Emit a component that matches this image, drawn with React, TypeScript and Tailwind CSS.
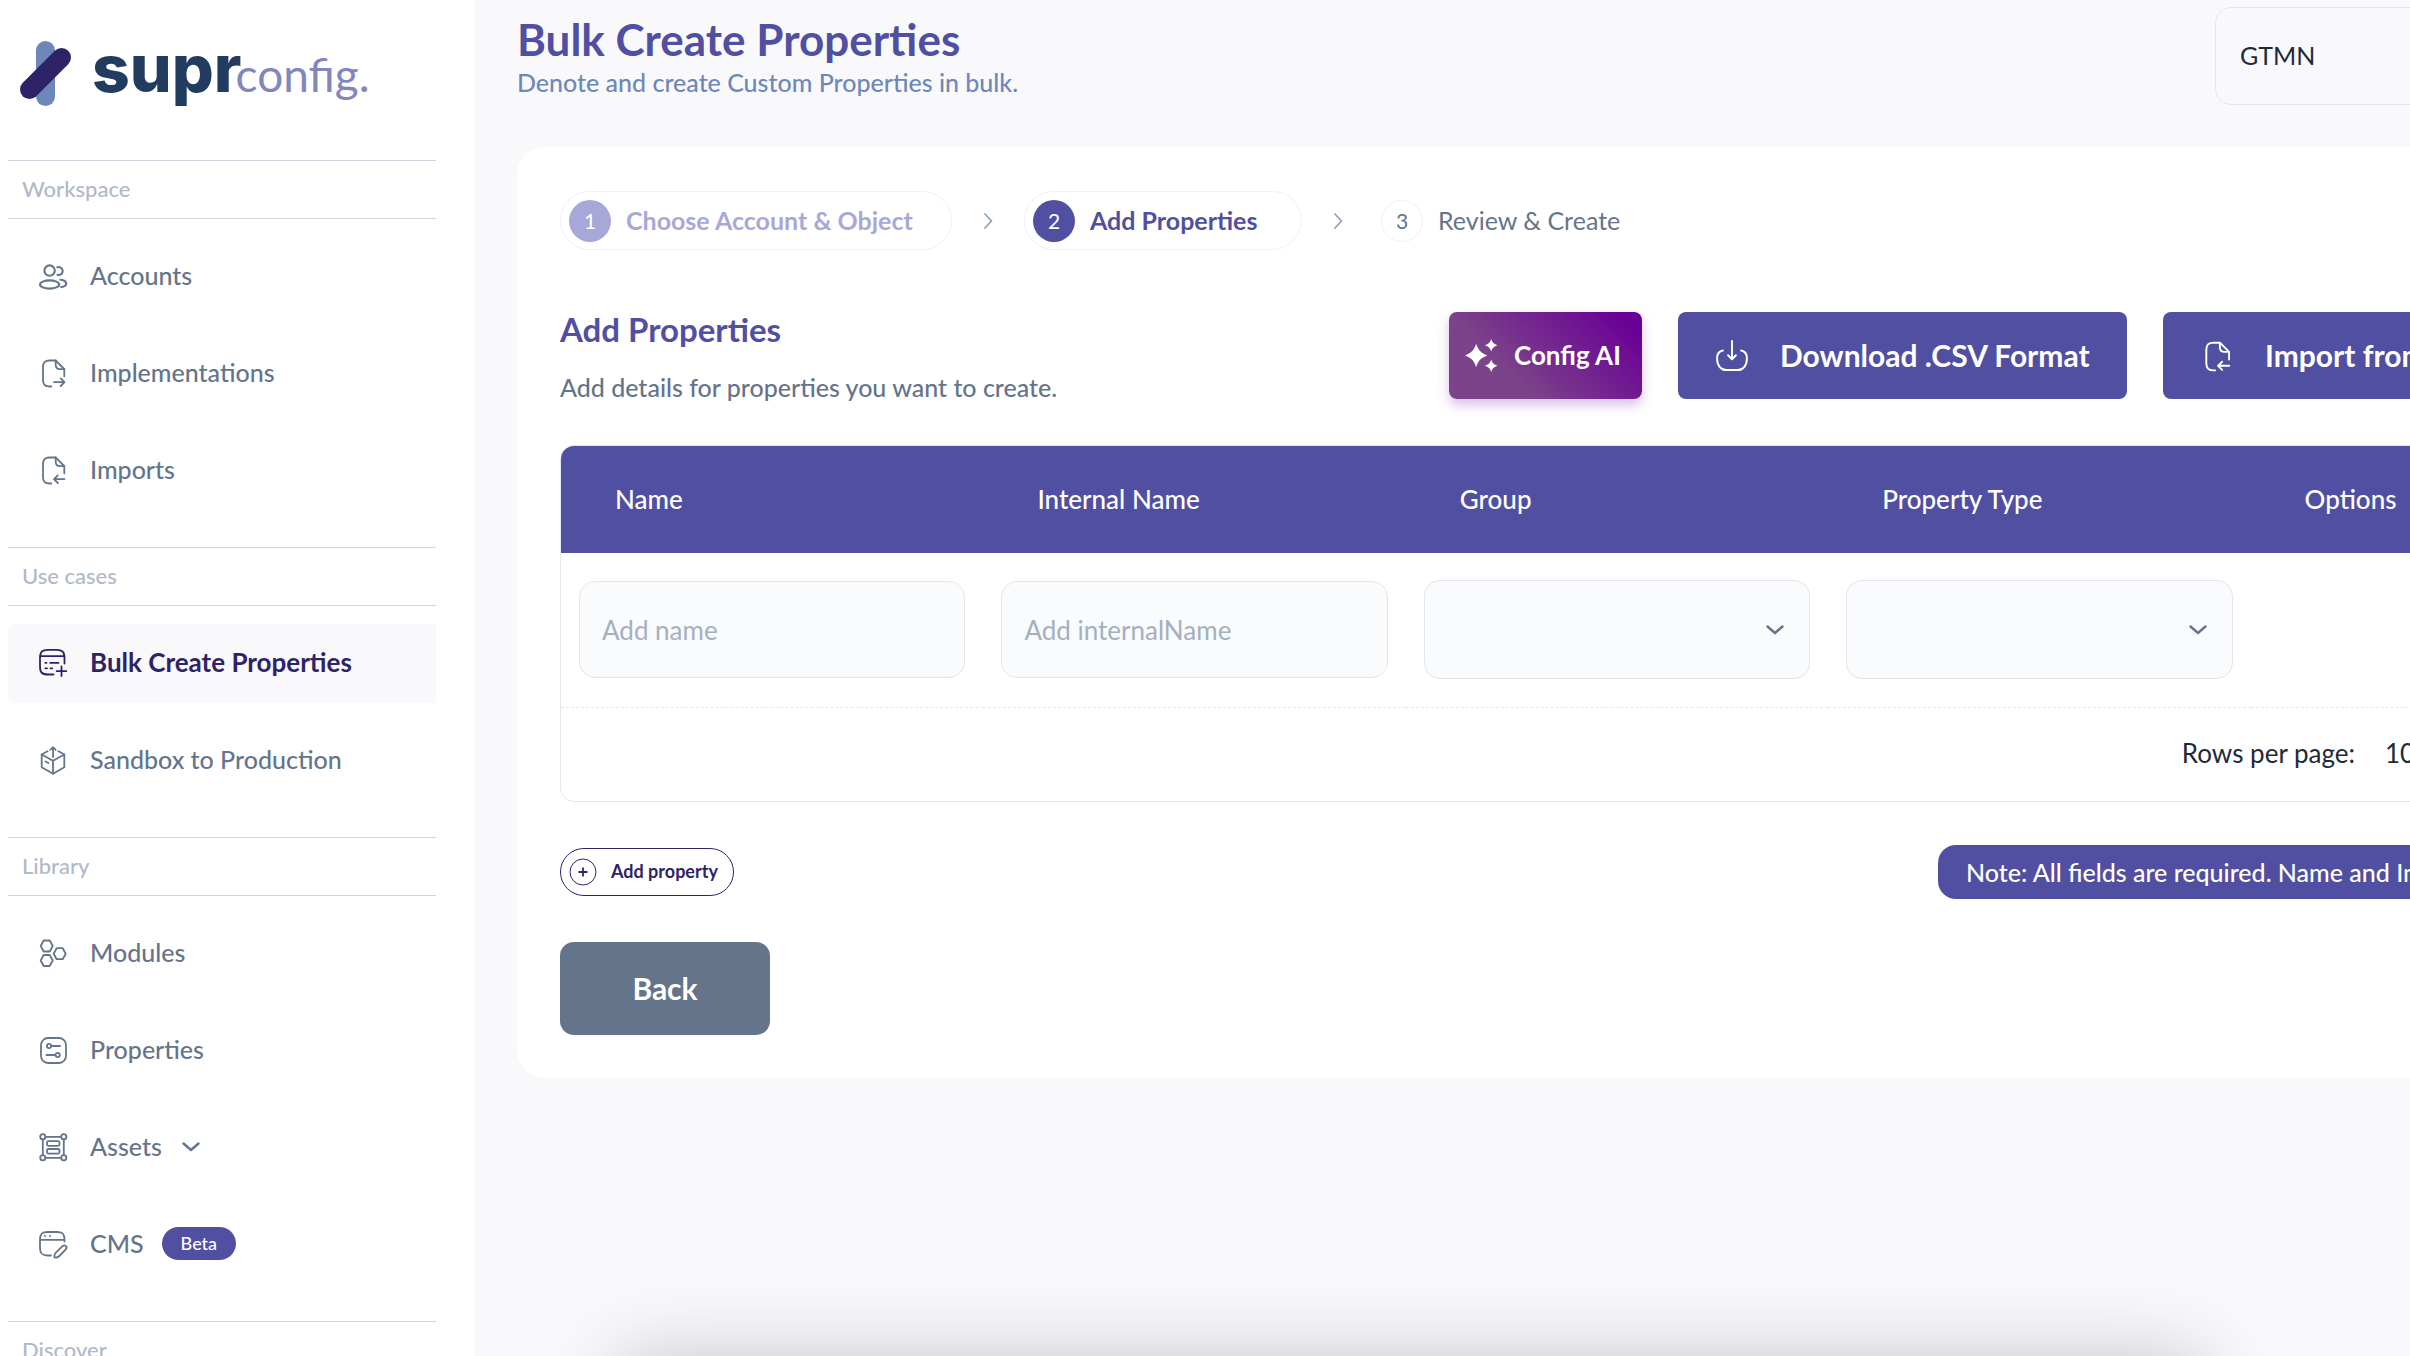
import React from 'react';
import clsx from 'clsx';

interface IconProps {
  className?: string;
}

interface NavItem {
  label: string;
  icon: React.FC<IconProps>;
  active?: boolean;
  expandable?: boolean;
  badge?: string;
}

interface NavSection {
  title: string;
  items: NavItem[];
}

interface IconBaseProps extends IconProps {
  children: React.ReactNode;
}

// All outline icons share a 30px grid
const IconBase: React.FC<IconBaseProps> = ({ className = 'size-[30px]', children }) => (
  <svg
    viewBox="0 0 30 30"
    fill="none"
    stroke="currentColor"
    strokeWidth="1.8"
    strokeLinecap="round"
    strokeLinejoin="round"
    aria-hidden="true"
    className={clsx('shrink-0', className)}
  >
    {children}
  </svg>
);

const AccountsIcon: React.FC<IconProps> = (props) => (
  <IconBase {...props}>
    <g strokeWidth="2.1">
      <circle cx="11.6" cy="9.6" r="5.2" />
      <ellipse cx="11.6" cy="23.5" rx="9.6" ry="4.1" />
      <path d="M19.3 6.2c2-.5 5.4.4 5.4 3.8s-3.2 4.400-5.200 3.800" />
      <path d="M22.4 18.8c3.2.3 5.8 1.6 5.8 3.7s-2 3.200-5 3.500" />
    </g>
  </IconBase>
);

const FileOutIcon: React.FC<IconProps> = (props) => (
  <IconBase {...props}>
    <path d="M13.3 28.5H11.5c-4.500 0-6.500-2-6.500-6.500V9c0-4.500 2-6.500 6.500-6.500h6.200l8.600 8.600v7.200" />
    <path d="M17.7 2.500v4.300c0 3 1.300 4.300 4.300 4.300h4.300" />
    <path d="M16 24.2h10.500M22.700 20.400l3.800 3.800-3.800 3.800" />
  </IconBase>
);

const FileInIcon: React.FC<IconProps> = (props) => (
  <IconBase {...props}>
    <path d="M13.3 28.5H11.5c-4.500 0-6.500-2-6.500-6.500V9c0-4.500 2-6.500 6.500-6.500h6.200l8.600 8.600v7.200" />
    <path d="M17.7 2.500v4.300c0 3 1.300 4.300 4.300 4.300h4.300" />
    <path d="M26.5 24.200H16M19.800 20.400L16 24.200l3.800 3.800" />
  </IconBase>
);

const BulkIcon: React.FC<IconProps> = (props) => (
  <IconBase {...props}>
    <path d="M15.5 26.500H10c-6 0-8-2-8-8V10c0-6 2-8.200 8-8.200h8.500c6 0 8 2.200 8 8.200v5.500M2.200 8.200h24.100" />
    <path d="M12.2 14.800h8.300M7.300 14.800h1.200M7.300 20.300h1.700M12.500 20.300h1.700M23.500 18.500v9.500M18.700 23.200h9.600" />
  </IconBase>
);

const SandboxIcon: React.FC<IconProps> = (props) => (
  <IconBase {...props}>
    <path d="M9.5 6.300L3.700 9.500v12.700L15 28.700l11.300-6.500V9.500l-5.800-3.200" />
    <path d="M3.7 9.500L15 15.700l11.300-6.200M15 15.700v13M7.500 16.500l2.800 1.500" />
    <path d="M15 12V2.500M12.300 4.800L15 2.200l2.700 2.600" />
  </IconBase>
);

const ModulesIcon: React.FC<IconProps> = (props) => (
  <IconBase {...props}>
    <path d="M5.7 2.500h6l3 5.500-3 5.500h-6L2.700 8z" />
    <path d="M5.7 17h6l3 5.500-3 5.500h-6l-3-5.500z" />
    <path d="M18.7 10.200h6l3 5.500-3 5.500h-6l-3-5.500z" />
  </IconBase>
);

const PropertiesIcon: React.FC<IconProps> = (props) => (
  <IconBase {...props}>
    <rect x="3" y="3" width="25" height="25" rx="7" />
    <circle cx="11" cy="11" r="2.1" />
    <path d="M13.5 11h8.500M8.500 20h8.800" />
    <circle cx="19.7" cy="20" r="2.1" />
  </IconBase>
);

const AssetsIcon: React.FC<IconProps> = (props) => (
  <IconBase {...props}>
    <circle cx="4.8" cy="4.8" r="2.6" />
    <circle cx="25.8" cy="4.8" r="2.6" />
    <circle cx="4.8" cy="25.8" r="2.6" />
    <circle cx="25.8" cy="25.8" r="2.6" />
    <path d="M7.5 4.800h15.600M7.500 25.800h15.600M4.800 7.500v15.600M25.800 7.500v15.600" />
    <rect x="9" y="9.2" width="12.5" height="4.6" rx="1.5" />
    <rect x="9" y="17" width="12.5" height="4.6" rx="1.5" />
  </IconBase>
);

const CmsIcon: React.FC<IconProps> = (props) => (
  <IconBase {...props}>
    <path d="M13 26.500h-3.500c-5.500 0-7.500-2-7.500-7.500v-8.500C2 5 4 3 9.500 3h9.500c5.500 0 7.500 2 7.500 7.500v2M2.200 10.800h24.200" />
    <path d="M7 7h.1M12 7h.1" />
    <path d="M16.6 28.600c-.6-2 0-3.600 1.200-4.900l6.700-6.500c2.600-2 5.400.5 3.300 3.200l-6.500 6.600c-1.300 1.200-2.700 1.800-4.700 1.600z" />
  </IconBase>
);

const DownloadIcon: React.FC<IconProps> = (props) => (
  <IconBase {...props}>
    <path d="M6.500 9.800C3 10.500 1 13.500 1 17c0 6.800 3.500 11.200 8.700 11.200h10.600c5.200 0 8.700-4.400 8.700-11.200 0-3.500-2-6.500-5.500-7.200" />
    <path d="M15 1v16.800M11.300 14.300l3.700 3.700 3.700-3.700" />
  </IconBase>
);

const SparklesIcon: React.FC<IconProps> = ({ className }) => (
  <svg viewBox="0 0 34 34" fill="currentColor" aria-hidden="true" className={clsx('shrink-0', className)}>
    <path d="M11.5 5c2 6.500 5 9.500 11.500 12-6.500 2.500-9.500 5.500-11.500 12C9.500 22.500 6.500 19.500 0 17 6.500 14.500 9.500 11.500 11.500 5z" />
    <path d="M27 0c1 3.500 2.800 5.200 6.500 6.500C29.800 7.800 28 9.500 27 13c-1-3.500-2.800-5.200-6.500-6.500C24.200 5.200 26 3.500 27 0z" />
    <path d="M27 21c1 3.500 2.800 5.200 6.500 6.500-3.700 1.300-5.500 3-6.500 6.500-1-3.500-2.800-5.200-6.500-6.500 3.700-1.300 5.500-3 6.500-6.500z" />
  </svg>
);

const ChevronDown: React.FC<IconProps> = ({ className }) => (
  <svg viewBox="0 0 18 10" fill="none" stroke="currentColor" strokeWidth="2.4" strokeLinecap="round" strokeLinejoin="round" aria-hidden="true" className={clsx('shrink-0', className)}>
    <path d="M1.5 1.500L9 8l7.500-6.500" />
  </svg>
);

const StepArrow = () => (
  <svg viewBox="0 0 10 18" fill="none" stroke="currentColor" strokeWidth="1.8" strokeLinecap="round" strokeLinejoin="round" aria-hidden="true" className="h-[18px] w-[10px] shrink-0 text-slate-400">
    <path d="M2 2l6.500 7L2 16" />
  </svg>
);

const SECTIONS: NavSection[] = [
  {
    title: 'Workspace',
    items: [
      { label: 'Accounts', icon: AccountsIcon },
      { label: 'Implementations', icon: FileOutIcon },
      { label: 'Imports', icon: FileInIcon },
    ],
  },
  {
    title: 'Use cases',
    items: [
      { label: 'Bulk Create Properties', icon: BulkIcon, active: true },
      { label: 'Sandbox to Production', icon: SandboxIcon },
    ],
  },
  {
    title: 'Library',
    items: [
      { label: 'Modules', icon: ModulesIcon },
      { label: 'Properties', icon: PropertiesIcon },
      { label: 'Assets', icon: AssetsIcon, expandable: true },
      { label: 'CMS', icon: CmsIcon, badge: 'Beta' },
    ],
  },
  { title: 'Discover', items: [] },
];

const COLUMNS = ['Name', 'Internal Name', 'Group', 'Property Type', 'Options'];

const Logo = () => (
  <a href="#" className="flex h-[160px] items-start pl-3 pt-[41px]">
    <svg viewBox="0 0 52 65" aria-hidden="true" className="h-[65px] w-[52px] shrink-0">
      <rect x="16" y="0" width="19" height="65" rx="9.5" fill="#6d88b8" />
      <path d="M9.5 48.500l32-32" stroke="#2d2366" strokeWidth="19" strokeLinecap="round" />
    </svg>
    <span className="ml-5 flex items-baseline leading-[54px]">
      <span className="font-['Inter'] text-[66px] font-extrabold text-[#223c60]">supr</span>
      <span className="-ml-1.5 text-[46px] text-[#8286bf]">config.</span>
    </span>
  </a>
);

const Sidebar = () => (
  <aside className="w-[474px] shrink-0 bg-white pl-2 pr-[38px]">
    <Logo />
    <nav>
      {SECTIONS.map((section) => (
        <section key={section.title} className="mb-[37px]">
          <h2 className="border-y border-[#cfd3e0] pb-px pl-[14px] text-[22px] font-medium leading-[56px] text-[#b0b9c9]">
            {section.title}
          </h2>
          <ul className="mt-[18px] flex flex-col gap-[18px]">
            {section.items.map(({ label, icon: Icon, active, expandable, badge }) => (
              <li key={label}>
                <a
                  href="#"
                  aria-current={active ? 'page' : undefined}
                  className={clsx(
                    'flex h-[79px] items-center rounded-l-lg pb-0.5 pl-[30px]',
                    active ? 'bg-[#f9f9fc] text-[26px] font-bold text-[#2d2366]' : 'text-[25px] font-medium text-[#64748b]'
                  )}
                >
                  <Icon />
                  <span className="ml-[22px]">{label}</span>
                  {expandable && <ChevronDown className="ml-5 h-[10px] w-[18px]" />}
                  {badge && (
                    <span className="ml-[18px] rounded-full bg-[#514fa1] px-[19px] text-[18px] font-medium leading-[33px] text-white">
                      {badge}
                    </span>
                  )}
                </a>
              </li>
            ))}
          </ul>
        </section>
      ))}
    </nav>
  </aside>
);

const Stepper = () => (
  <ol className="flex h-[59px] items-center text-[25px]">
    <li className="flex h-full w-[392px] items-center gap-[15px] rounded-full border border-[#eef0f4] pl-2 font-bold text-[#a8a8d8]">
      <span className="flex size-[42px] items-center justify-center rounded-full bg-[#a8a8d8] text-[21px] font-normal text-white">1</span>
      Choose Account &amp; Object
    </li>
    <li className="flex w-[72px] justify-center" aria-hidden="true"><StepArrow /></li>
    <li aria-current="step" className="flex h-full w-[278px] items-center gap-[15px] rounded-full border border-[#eef0f4] pl-2 font-bold text-[#514fa1]">
      <span className="flex size-[42px] items-center justify-center rounded-full bg-[#514fa1] text-[21px] font-normal text-white">2</span>
      Add Properties
    </li>
    <li className="flex w-[72px] justify-center" aria-hidden="true"><StepArrow /></li>
    <li className="flex h-full items-center gap-[15px] pl-[7px] text-[#64748b]">
      <span className="flex size-[42px] items-center justify-center rounded-full border border-[#eef0f4] text-[21px]">3</span>
      Review &amp; Create
    </li>
  </ol>
);

const fieldClass = 'w-full rounded-2xl border border-[#e2e6ec] bg-[#fafbfd] px-[22px] text-[26px] text-slate-800 outline-none placeholder:text-[#a3b0c2]';

const SelectField = ({ label }: { label: string }) => (
  <div className="relative">
    <select aria-label={label} defaultValue="" className={clsx(fieldClass, 'block h-[99px] appearance-none')}>
      <option value=""></option>
    </select>
    <ChevronDown className="pointer-events-none absolute right-[26px] top-[45px] h-[10px] w-[18px] text-[#64748b]" />
  </div>
);

const PropertiesTable = () => (
  <div className="mt-[42px] overflow-hidden rounded-[14px] border border-slate-200">
    <table className="w-full table-fixed text-left text-[26px]">
      <thead className="bg-[#514fa1] text-white">
        <tr>
          {COLUMNS.map((column) => (
            <th key={column} scope="col" className="h-[107px] pl-[54px] font-medium">{column}</th>
          ))}
        </tr>
      </thead>
      <tbody>
        <tr className="h-[154px] border-b border-dashed border-[#e5e8ec]">
          <td className="px-[18px]">
            <input type="text" aria-label="Name" placeholder="Add name" className={clsx(fieldClass, 'block h-[97px]')} />
          </td>
          <td className="px-[18px]">
            <input type="text" aria-label="Internal Name" placeholder="Add internalName" className={clsx(fieldClass, 'block h-[97px]')} />
          </td>
          <td className="px-[18px]"><SelectField label="Group" /></td>
          <td className="px-[18px]"><SelectField label="Property Type" /></td>
          <td />
        </tr>
      </tbody>
    </table>
    <div className="flex h-[93px] items-center justify-end pb-0.5 text-[26px] text-[#1f2937]">
      <label htmlFor="rows-per-page">Rows per page:</label>
      <select id="rows-per-page" defaultValue="10" className="ml-[30px] w-[288px] appearance-none bg-transparent">
        <option>10</option>
        <option>25</option>
        <option>50</option>
      </select>
    </div>
  </div>
);

export default function App() {
  return (
    <div className="relative flex h-screen overflow-hidden bg-[#f9f9fc] font-['Lato',sans-serif]">
      <Sidebar />

      <main className="min-w-0 flex-1 overflow-hidden pl-[43px]">
        <div className="min-w-[2200px]">
          <header className="flex h-[147px] items-start justify-between">
            <div className="pt-3">
              <h1 className="text-[44px] font-bold leading-[54px] text-[#514fa1]">Bulk Create Properties</h1>
              <p className="text-[25px] font-medium leading-8 text-[#6d88b8]">Denote and create Custom Properties in bulk.</p>
            </div>
            <select
              aria-label="Account"
              defaultValue="GTMN"
              className="mt-[7px] h-[98px] w-[502px] appearance-none rounded-2xl border border-gray-200 bg-transparent px-6 text-[25px] text-[#1f2937]"
            >
              <option>GTMN</option>
            </select>
          </header>

          <div className="rounded-[28px] bg-white px-[43px] pb-[43px] pt-[44px]">
            <Stepper />

            <div className="mt-[62px] flex items-start">
              <div className="w-[889px] shrink-0">
                <h2 className="text-[33px] font-bold leading-[34px] text-[#514fa1]">Add Properties</h2>
                <p className="mt-[25px] text-[25px] font-medium leading-8 text-[#64748b]">Add details for properties you want to create.</p>
              </div>
              <button className="flex h-[87px] w-[193px] shrink-0 items-center gap-4 rounded-lg bg-linear-[45deg,#7b4389_30%,#6a0096_92%] pl-4 text-[26px] font-bold text-white shadow-[0_6px_12px_rgba(106,0,150,0.25)]">
                <SparklesIcon className="size-[33px]" />
                Config AI
              </button>
              <button className="ml-9 flex h-[87px] w-[449px] shrink-0 items-center gap-8 rounded-lg bg-[#514fa1] pl-[38px] text-[30px] font-bold text-white">
                <DownloadIcon className="size-8" />
                Download .CSV Format
              </button>
              <button className="ml-9 flex h-[87px] flex-1 items-center gap-8 whitespace-nowrap rounded-lg bg-[#514fa1] pl-[38px] text-[30px] font-bold text-white">
                <FileInIcon className="size-8" />
                Import from CSV
              </button>
            </div>

            <PropertiesTable />

            <div className="mt-[42px] flex h-[56px] items-center justify-between">
              <button className="flex h-12 w-[174px] items-center gap-[14px] rounded-full border border-[#2d2366] pl-2 text-[18px] font-bold text-[#2d2366]">
                <svg viewBox="0 0 28 28" fill="none" stroke="currentColor" aria-hidden="true" className="size-7 shrink-0">
                  <circle cx="14" cy="14" r="13" strokeWidth="1" />
                  <path d="M14 9.500v9M9.500 14h9" strokeWidth="1.8" />
                </svg>
                Add property
              </button>
              <p className="w-[736px] whitespace-nowrap rounded-[18px] bg-[#514fa1] pl-7 text-[25px] font-medium leading-[54px] text-white">
                Note: All fields are required. Name and Internal Name
              </p>
            </div>

            <button className="mt-[42px] h-[93px] w-[210px] rounded-[14px] bg-[#64748b] text-[30px] font-bold text-white">
              Back
            </button>
          </div>
        </div>
      </main>

      {/* Floating panel docked just under the fold, only its shadow shows */}
      <div className="pointer-events-none absolute left-[616px] right-[206px] top-full h-40 shadow-[0_0_80px_rgba(0,0,0,0.2)]" />
    </div>
  );
}
